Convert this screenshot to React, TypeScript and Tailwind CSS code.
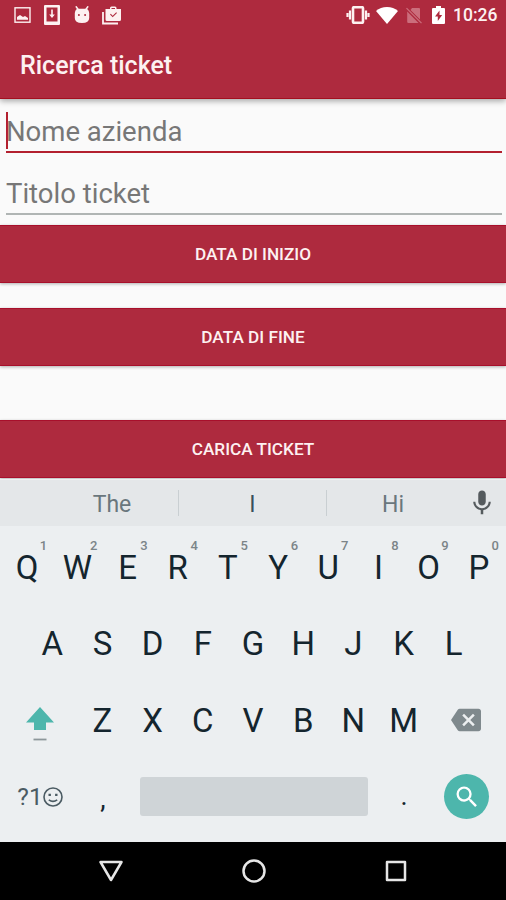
import { useState } from "react";
import { MdMic, MdSearch, MdBackspace } from "react-icons/md";

const rigaAlta = ["Q", "W", "E", "R", "T", "Y", "U", "I", "O", "P"];
const rigaMedia = ["A", "S", "D", "F", "G", "H", "J", "K", "L"];
const rigaBassa = ["Z", "X", "C", "V", "B", "N", "M"];

function StatusBar() {
  return (
    <div className="flex h-[30px] items-center justify-between pl-[14px] pr-[10px] text-[#fdf1f1]">
      <div className="flex items-center">
        <svg width="17" height="16" viewBox="0 0 17 16">
          <rect x="1" y="0.8" width="15" height="14.4" fill="none" stroke="currentColor" strokeWidth="1.4" />
          <path d="M3 12.8V10l3-2 3 2 2-1 3 2v1.8z" fill="currentColor" />
        </svg>
        <svg width="16" height="20" viewBox="0 0 16 20" className="ml-[13px]">
          <path fillRule="evenodd" d="M1 0h14q1 0 1 1v18q0 1-1 1H1q-1 0-1-1V1Q0 0 1 0zM2.500 2.500v14h11v-14z" fill="currentColor" />
          <path d="M7.200 4.500h1.600v5h2L8 13 5.200 9.500h2z" fill="currentColor" />
        </svg>
        <svg width="16" height="18" viewBox="0 0 16 18" className="ml-[14px]">
          <path d="M2.200 0.800L4.500 4M13.800 0.800L11.500 4" stroke="currentColor" strokeWidth="1.500" strokeLinecap="round" />
          <path fillRule="evenodd" d="M3 2.800h10Q15.200 4.500 15.200 7v5q0 5-7.200 5T0.800 12V7Q0.800 4.500 3 2.800zM4.900 8.100a1 1 0 1 0 0 2 1 1 0 0 0 0-2zM11.100 8.100a1 1 0 1 0 0 2 1 1 0 0 0 0-2z" fill="currentColor" />
        </svg>
        <svg width="19" height="19" viewBox="0 0 19 19" className="ml-[12px]">
          <path d="M1 6v11.500h15" fill="none" stroke="currentColor" strokeWidth="1.800" />
          <path fillRule="evenodd" d="M3.500 3H8V2q0-1.500 1.500-1.500h3.500Q14.500 0.500 14.500 2v1H19v10.500q0 1.500-1.500 1.500H5q-1.500 0-1.500-1.500zM9.500 2v1H13V2zM8 8.500l2.700 2.800 4.300-4.300-0.800-0.800-3.500 3.500-1.900-2z" fill="currentColor" />
        </svg>
      </div>
      <div className="flex items-center">
        <svg width="24" height="18" viewBox="0 0 24 18">
          <rect x="7" y="1.200" width="10" height="15.600" rx="1" fill="none" stroke="currentColor" strokeWidth="2.600" />
          <path d="M4 4.500v9M20 4.500v9M1.500 7v4M22.500 7v4" stroke="currentColor" strokeWidth="2.200" />
        </svg>
        <svg width="22" height="17" viewBox="0 0 22 17" className="ml-[6px] text-white">
          <path d="M0 4Q4.500 0 11 0t11 4L11 17z" fill="currentColor" />
        </svg>
        <svg width="16" height="17" viewBox="0 0 16 17" className="ml-2 text-[#cb6e7c]">
          <path d="M6 1h7q1 0 1 1v10.500L4.500 3zM1.200 4.500L12.500 16H2.400q-1.200 0-1.200-1.200z" fill="currentColor" />
          <path d="M0.500 1.200l15 15" stroke="currentColor" strokeWidth="1.200" />
        </svg>
        <svg width="13" height="18" viewBox="0 0 13 18" className="ml-[10px] text-white">
          <path fillRule="evenodd" d="M4 0h5v2h3q1 0 1 1v14q0 1-1 1H1q-1 0-1-1V3q0-1 1-1h3zM7.500 4.500L3 10.500h2.800V15L10.200 9H7.500z" fill="currentColor" />
        </svg>
        <span className="ml-[8px] w-[43px] pt-px text-[17.5px] font-medium leading-none whitespace-nowrap">10:26</span>
      </div>
    </div>
  );
}

function Bottone({ testo }: { testo: string }) {
  return (
    <button className="flex h-[58px] w-full shrink-0 items-center justify-center border-y border-[#a80f2b] bg-[#ae2a3e] pt-[2px] text-[17.2px] font-medium text-[#fdf1f1] shadow-[0_1px_3px_rgba(0,0,0,0.3)]">
      {testo}
    </button>
  );
}

function Tasto({ lettera, numero }: { lettera: string; numero?: number }) {
  return (
    <button className="relative flex w-[50.2px] items-center justify-center text-[33px] leading-none text-[#14252e]">
      {lettera}
      {numero !== undefined && (
        <span className="absolute right-[5px] top-[10px] text-[13px] font-medium leading-none text-[#7b8488]">{numero}</span>
      )}
    </button>
  );
}

function Tastiera() {
  return (
    <div className="bg-[#eceff1]">
      <div className="flex h-[47px] items-center border-t border-[#eef0f1] bg-[#e4e7e9] text-[23px] text-[#6a777d]">
        <span className="ml-[46px] w-[132px] pt-1 text-center">The</span>
        <span className="h-[26px] w-px bg-[#c9cfd2]" />
        <span className="w-[147px] pt-1 text-center text-[#37505d]">I</span>
        <span className="h-[26px] w-px bg-[#c9cfd2]" />
        <span className="w-[132px] pt-1 text-center">Hi</span>
        <MdMic className="ml-[8px] h-[30px] w-[30px] text-[#555b5e]" />
      </div>
      <div className="flex h-[316px] flex-col px-[2px] pt-[3px]">
        <div className="flex h-[76.5px] justify-center">
          {rigaAlta.map((l, i) => (
            <Tasto key={l} lettera={l} numero={(i + 1) % 10} />
          ))}
        </div>
        <div className="flex h-[76.5px] justify-center">
          {rigaMedia.map((l) => (
            <Tasto key={l} lettera={l} />
          ))}
        </div>
        <div className="flex h-[76.5px] justify-center">
          <button className="flex w-[75px] items-center justify-center">
            <svg width="28" height="35" viewBox="0 0 28 35" className="mt-[9px]">
              <path d="M14 0l14 15.500h-8V23H8v-7.500H0z" fill="#4db6ac" />
              <path d="M7.500 32.500h13" stroke="#8d979b" strokeWidth="1.800" />
            </svg>
          </button>
          {rigaBassa.map((l) => (
            <Tasto key={l} lettera={l} />
          ))}
          <button className="flex w-[75px] items-center justify-center">
            <MdBackspace className="h-[30px] w-[30px] text-[#7f898d]" />
          </button>
        </div>
        <div className="flex h-[76.5px] items-center">
          <button className="flex w-[76px] items-center justify-center text-[24.5px] leading-none text-[#4b5b63]">
            ?1
            <svg width="20" height="20" viewBox="0 0 20 20" fill="none" stroke="currentColor" strokeWidth="1.600">
              <circle cx="10" cy="10" r="9" />
              <path d="M5.800 12.800q4.200 3.200 8.400 0" />
              <path d="M5.500 7.800h2.400M12.100 7.800h2.400" strokeWidth="2.200" />
            </svg>
          </button>
          <button className="w-[50px] pt-[5px] text-[27px] leading-none text-[#14252e]">,</button>
          <button className="ml-[12px] h-[39px] w-[228px] rounded-[3px] bg-[#cfd4d7]" />
          <button className="ml-[11px] w-[50px] text-[27px] leading-none text-[#14252e]">.</button>
          <button className="ml-[15px] flex h-[45px] w-[45px] items-center justify-center rounded-full bg-[#4db6ac]">
            <MdSearch className="h-[28px] w-[28px] text-white" />
          </button>
        </div>
      </div>
    </div>
  );
}

function App() {
  const [azienda, setAzienda] = useState("");
  const [titolo, setTitolo] = useState("");

  return (
    <div className="flex h-[900px] w-[506px] flex-col overflow-hidden bg-[#fafafa] font-['Roboto',sans-serif]">
      <header className="relative h-[99px] shrink-0 border-b border-[#a3101f] bg-[#ae2a3e] shadow-[0_2px_6px_rgba(0,0,0,0.35)]">
        <StatusBar />
        <h1 className="pl-5 pt-[19px] text-[25px] font-medium leading-[34px] text-[#fdf1f1]">Ricerca ticket</h1>
      </header>

      <div className="flex h-[126px] shrink-0 flex-col pl-[6px] pr-[4px]">
        <div className="flex h-[54px] items-center border-b-2 border-[#b3202f] pt-[10px]">
          <span className="h-[37px] w-[2px] shrink-0 bg-[#b3202f]" />
          <input type="text" value={azienda} onChange={(e) => setAzienda(e.target.value)} placeholder="Nome azienda"
            className="-ml-[2px] h-[40px] w-full pt-[3px] text-[27.5px] text-[#333] outline-none placeholder:text-[#777]" />
        </div>
        <div className="flex h-[62px] items-center border-b-2 border-[#b0b5b4] pt-[18px]">
          <input type="text" value={titolo} onChange={(e) => setTitolo(e.target.value)} placeholder="Titolo ticket"
            className="h-[40px] w-full pt-[4px] text-[27.5px] text-[#333] outline-none placeholder:text-[#777]" />
        </div>
      </div>

      <div className="flex h-[254px] shrink-0 flex-col">
        <Bottone testo="DATA DI INIZIO" />
        <div className="h-[25px] shrink-0" />
        <Bottone testo="DATA DI FINE" />
        <div className="h-[54px] shrink-0" />
        <Bottone testo="CARICA TICKET" />
      </div>

      <Tastiera />

      <nav className="flex h-[58px] shrink-0 items-center justify-between bg-black px-[99px] text-[#e6e6e6]">
        <svg width="24" height="22" viewBox="0 0 24 22" fill="none" stroke="currentColor" strokeWidth="2.500" strokeLinejoin="round">
          <path d="M1.500 2h21L12 20z" />
        </svg>
        <svg width="24" height="24" viewBox="0 0 24 24" fill="none" stroke="currentColor" strokeWidth="2.500">
          <circle cx="12" cy="12" r="10.500" />
        </svg>
        <svg width="22" height="22" viewBox="0 0 22 22" fill="none" stroke="currentColor" strokeWidth="2.500" strokeLinejoin="round">
          <rect x="2" y="2" width="18" height="18" />
        </svg>
      </nav>
    </div>
  );
}

export default App;
